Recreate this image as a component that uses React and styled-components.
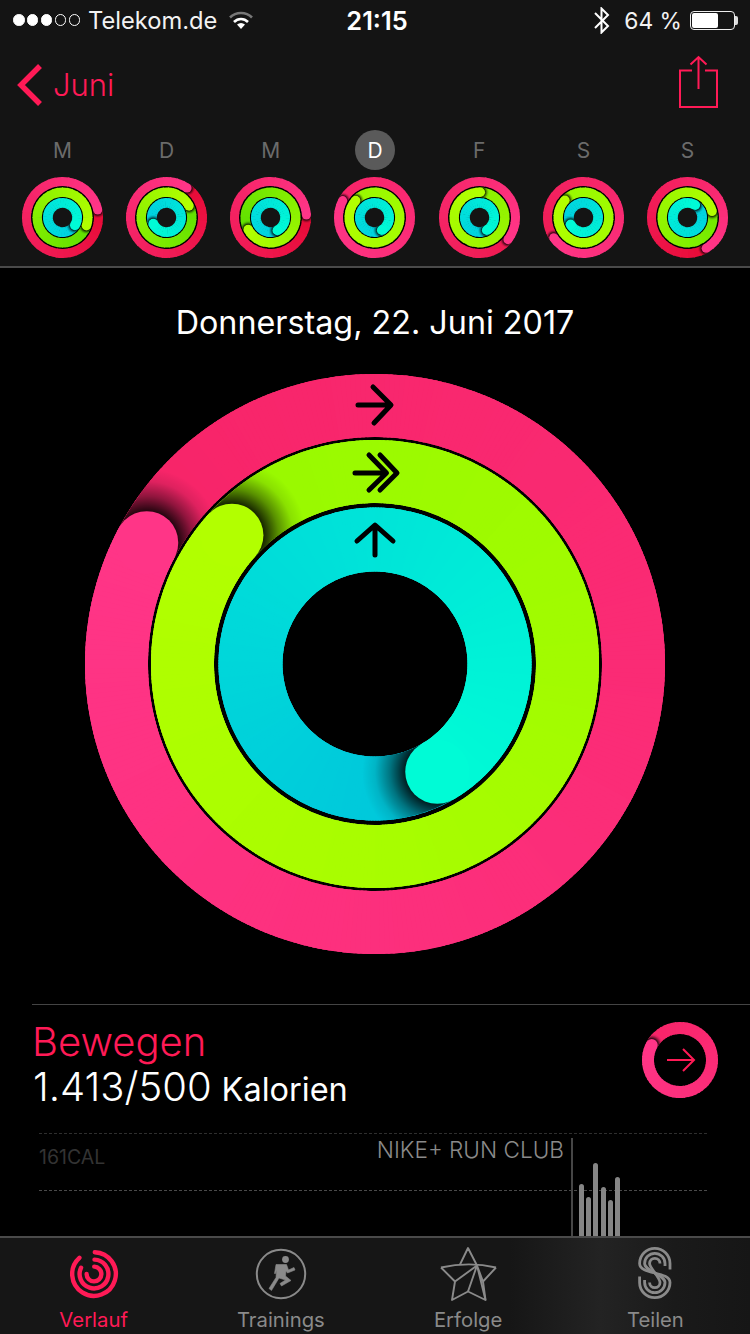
import React from 'react';
import styled, { createGlobalStyle } from 'styled-components';

const Global = createGlobalStyle`
  html, body { margin: 0; padding: 0; background: #000; }
  * { box-sizing: border-box; }
`;

const Frame = styled.div`
  width: 750px; height: 1334px; background: #000; overflow: hidden;
  display: flex; flex-direction: column;
  font-family: Inter, "Liberation Sans", sans-serif; color: #fff;
`;
const Header = styled.header`
  height: 268px; flex: none; background: #141414; border-bottom: 2px solid #4a4a4a;
`;
const StatusBar = styled.div`
  height: 40px; padding: 0 12px 0 13px;
  display: grid; grid-template-columns: 1fr auto 1fr; align-items: center;
  font-size: 23.7px; color: #f2f2f2;
`;
const StatusLeft = styled.div`display: flex; align-items: center;`;
const StatusRight = styled.div`display: flex; align-items: center; justify-content: flex-end;`;
const Dots = styled.div`display: flex; gap: 2.4px; margin-right: 8px;`;
const Dot = styled.span`
  width: 11.5px; height: 11.5px; border-radius: 50%;
  background: ${p => (p.$on ? '#fff' : 'transparent')};
  border: 1px solid #fff;
`;
const Time = styled.div`font-weight: 600; font-size: 25.4px; color: #fff; margin-left: 3px;`;
const Percent = styled.span`margin: 0 8px 0 14px; font-size: 22.8px;`;
const Battery = styled.div`
  position: relative; width: 45px; height: 19px; border: 1px solid #eee; border-radius: 4px; padding: 1px;
  margin-right: 3px;
  &::after {
    content: ''; position: absolute; right: -4px; top: 4px; width: 3px; height: 9px;
    background: #ddd; border-radius: 0 2px 2px 0;
  }
`;
const BatteryFill = styled.div`height: 100%; background: #fff; border-radius: 2px;`;
const Nav = styled.nav`
  height: 90px; display: flex; align-items: center; justify-content: space-between;
  padding: 0 31px 0 16px;
`;
const Back = styled.div`
  display: flex; align-items: center; gap: 9px; color: #ff1a56; font-size: 31px; font-weight: 300;
  line-height: 36px; margin-top: -1px;
`;
const ShareWrap = styled.div`margin-bottom: 6px;`;
const Week = styled.div`
  display: grid; grid-template-columns: repeat(7, 1fr); padding: 0 10.3px;
`;
const Day = styled.div`display: flex; flex-direction: column; align-items: center; gap: 7px;`;
const DayLabel = styled.div`
  width: 40px; height: 40px; border-radius: 50%;
  display: flex; align-items: center; justify-content: center; font-size: 21px;
  background: ${p => (p.$active ? '#5a5a5a' : 'transparent')};
  color: ${p => (p.$active ? '#fff' : '#6b6b6b')};
`;
const Main = styled.main`flex: 1; min-height: 0; overflow: hidden; display: flex; flex-direction: column;`;
const DateLine = styled.h1`
  margin: 35px 0 0; height: 40px; line-height: 40px; text-align: center;
  font-size: 32.3px; font-weight: 400; color: #fff;
`;
const Hero = styled.div`margin-top: 31px; height: 580px; display: flex; justify-content: center;`;
const Summary = styled.section`
  margin: 50px 0 0 32px; height: 129px; border-top: 1px solid #444;
  display: flex; justify-content: space-between; align-items: flex-start; padding: 15px 32px 0 0;
`;
const SummaryText = styled.div`display: flex; flex-direction: column;`;
const Title = styled.div`font-size: 40px; line-height: 44px; color: #ff1a56; font-weight: 300;`;
const Value = styled.div`font-size: 40px; line-height: 46px; color: #fff; font-weight: 300; margin-left: 1px;`;
const Unit = styled.span`font-size: 32.5px; margin-left: 10px; font-weight: 400;`;
const SummaryRing = styled.div`margin-top: 2px; height: 76px;`;
const Chart = styled.div`position: relative; flex: none; height: 103px; margin: 0 43px 0 39px;`;
const GridLine = styled.div`
  position: absolute; left: 0; right: 0; top: ${p => p.$top}px;
  border-top: 1px dashed ${p => p.$color};
`;
const AxisLabel = styled.div`
  position: absolute; left: 0; top: 12px; font-size: 19.5px; line-height: 24px; color: #333;
`;
const Source = styled.div`
  position: absolute; right: 143px; top: 3px; font-size: 22.6px; line-height: 28px; color: #8a8a8a; font-weight: 300;
  white-space: nowrap;
`;
const Marker = styled.div`
  position: absolute; left: 532px; top: 5px; bottom: 0; width: 2px; background: #464646;
`;
const Bars = styled.div`
  position: absolute; left: 540px; bottom: 0; display: flex; align-items: flex-end; gap: 2.2px;
`;
const Bar = styled.div`width: 5px; background: #858585; border-radius: 2.5px 2.5px 0 0;`;
const TabBar = styled.footer`
  height: 98px; flex: none; border-top: 2px solid #4a4a4a;
  background: linear-gradient(90deg, #161616 0%, #161616 68%, #232323 80%, #1a1a1a 90%, #161616 100%);
  display: grid; grid-template-columns: repeat(4, 1fr); padding: 6px 1px 0 0;
`;
const Tab = styled.div`
  display: flex; flex-direction: column; align-items: center;
  color: ${p => (p.$active ? '#ff1a56' : '#8a8a8a')};
`;
const TabIcon = styled.div`height: 60px;`;
const TabLabel = styled.div`margin-top: 3px; font-size: 20.3px; line-height: 26px;`;
const Svg = styled.svg`display: block;`;

const pt = (cx, cy, r, deg) => {
  const t = ((deg - 90) * Math.PI) / 180;
  return [cx + r * Math.cos(t), cy + r * Math.sin(t)];
};
const arc = (cx, cy, r, a, b) => {
  const [x0, y0] = pt(cx, cy, r, a);
  const [x1, y1] = pt(cx, cy, r, b);
  return `M${x0.toFixed(3)} ${y0.toFixed(3)}A${r} ${r} 0 ${b - a > 180 ? 1 : 0} 1 ${x1.toFixed(3)} ${y1.toFixed(3)}`;
};
const hex = h => [1, 3, 5].map(i => parseInt(h.slice(i, i + 2), 16));
const mix = (a, b, t) => {
  const A = hex(a), B = hex(b);
  return `rgb(${A.map((v, i) => Math.round(v + (B[i] - v) * t)).join(',')})`;
};

function Ring({ id, c, r, w, head, from, to, step = 2, reach = 1, lap = 1.5 }) {
  const n = Math.round(360 / step);
  const segs = [];
  for (let i = 0; i < n; i++) {
    const a = head - 360 + i * step;
    segs.push(
      <path key={i} d={arc(c, c, r, a, a + step + (i === n - 1 ? 0 : lap))} fill="none" stroke={mix(from, to, i / (n - 1))} strokeWidth={w} />
    );
  }
  const split = Math.round(n * 0.72);
  const [hx, hy] = pt(c, c, r, head);
  const ro = r + w / 2, ri = r - w / 2;
  const ann = `M${c - ro} ${c}a${ro} ${ro} 0 1 0 ${2 * ro} 0a${ro} ${ro} 0 1 0 ${-2 * ro} 0Z M${c - ri} ${c}a${ri} ${ri} 0 1 0 ${2 * ri} 0a${ri} ${ri} 0 1 0 ${-2 * ri} 0Z`;
  const sr = (w / 2) * 2.35 * reach;
  const inner = (w / 2) / sr;
  return (
    <g>
      <defs>
        <radialGradient id={`${id}g`} gradientUnits="userSpaceOnUse" cx={hx} cy={hy} r={sr}>
          <stop offset={inner} stopColor="#000" stopOpacity="0.85" />
          <stop offset={inner + (1 - inner) * 0.35} stopColor="#000" stopOpacity="0.42" />
          <stop offset={inner + (1 - inner) * 0.7} stopColor="#000" stopOpacity="0.1" />
          <stop offset="1" stopColor="#000" stopOpacity="0" />
        </radialGradient>
        <clipPath id={`${id}c`}><path d={ann} clipRule="evenodd" /></clipPath>
      </defs>
      {segs.slice(0, split)}
      <circle cx={hx} cy={hy} r={sr} fill={`url(#${id}g)`} clipPath={`url(#${id}c)`} />
      {segs.slice(split)}
      <circle cx={hx} cy={hy} r={w / 2} fill={to} />
    </g>
  );
}

const RED = '#e80b37', PINK = '#f72468', HOT = '#ff3587';
const LIME_D = '#5fe000', LIME = '#98f900', YEL = '#b2ff00';
const CY_D = '#00c4dc', CY_M = '#00cfe0', CY = '#00fbd6';

const days = [
  { l: 'M', p: 78, g: 109, c: 122, pf: RED, gf: LIME_D },
  { l: 'D', p: 35, g: 63, c: 245, pf: RED, gf: LIME_D },
  { l: 'M', p: 86, g: 242, c: 152, pf: RED, gf: LIME_D },
  { l: 'D', p: 298, g: 312, c: 150, pf: PINK, gf: LIME, active: true },
  { l: 'F', p: 128, g: 2, c: 150, pf: '#ee1a50', gf: '#8cf000' },
  { l: 'S', p: 236, g: 313, c: 242, pf: '#f01c55', gf: LIME },
  { l: 'S', p: 149, g: 76, c: 32, pf: RED, gf: '#70e800' },
];

function MiniRings({ d, i }) {
  return (
    <Svg width="81" height="81" viewBox="0 0 81 81">
      <circle cx="40.5" cy="40.5" r="31.5" fill="#000" />
      <circle cx="40.5" cy="40.5" r="10" fill="#141414" />
      <Ring id={`m${i}p`} c={40.5} r={36} w={9} head={d.p} from={d.pf} to={HOT} step={10} lap={2} reach={0.8} />
      <Ring id={`m${i}g`} c={40.5} r={25.3} w={9.4} head={d.g} from={d.gf} to={YEL} step={10} lap={2} reach={0.8} />
      <Ring id={`m${i}c`} c={40.5} r={14.6} w={9.8} head={d.c} from={CY_M} to={CY} step={10} lap={2} reach={0.8} />
    </Svg>
  );
}

const Glyph = styled.path`fill: none; stroke: #000; stroke-width: 5; stroke-linecap: round; stroke-linejoin: round;`;

function HeroRings() {
  return (
    <Svg width="580" height="580" viewBox="0 0 580 580">
      <Ring id="hp" c={290} r={258.5} w={63} head={298} from={PINK} to={HOT} step={1} />
      <Ring id="hg" c={290} r={192.5} w={63} head={312} from={LIME} to={YEL} step={1} />
      <Ring id="hc" c={290} r={124.5} w={64} head={150} from={CY_D} to={CY} step={1} />
      <g transform="translate(-85 -374)">
        <Glyph d="M358 405H390M373 387L391 405L374 423" />
        <Glyph d="M355 473H383M369 455L386.5 473L369 490M380 455L397 473L380 490" />
        <Glyph d="M375 555V526M357 541L375 525L393 541" />
      </g>
    </Svg>
  );
}

const Wifi = () => (
  <Svg width="24" height="20" viewBox="0 0 24 20" style={{ marginLeft: 12 }}>
    <path d="M1 7.5C7 1.5 17 1.5 23 7.5" fill="none" stroke="#777" strokeWidth="2.6" />
    <path d="M5 12C9 8 15 8 19 12" fill="none" stroke="#fff" strokeWidth="2.6" />
    <path d="M8 14.6C10.5 12.6 13.5 12.6 16 14.6L12 19Z" fill="#fff" />
  </Svg>
);
const Bluetooth = () => (
  <Svg width="16" height="27" viewBox="0 0 16 27">
    <path d="M1 6L14 19L7.5 25.5V1.5L14 8L1 21" fill="none" stroke="#fff" strokeWidth="2" />
  </Svg>
);
const BackChevron = () => (
  <Svg width="28" height="44" viewBox="0 0 28 44">
    <path d="M24 3L5 22L24 41" fill="none" stroke="#ff1a56" strokeWidth="5.5" />
  </Svg>
);
const Share = () => (
  <Svg width="40" height="54" viewBox="0 0 40 54">
    <path d="M13 15.5H1V52H38V15.5H26" fill="none" stroke="#ff1a56" strokeWidth="2" />
    <path d="M19.5 34V2M11.5 9.5L19.5 2L27.5 9.5" fill="none" stroke="#ff1a56" strokeWidth="2" />
  </Svg>
);

const VerlaufIcon = () => (
  <Svg width="58" height="60" viewBox="0 0 58 60" fill="none" stroke="#ff1a56" strokeWidth="4.4" strokeLinecap="round">
    <path d={arc(29, 30, 21.8, 2, 318)} />
    <path d={arc(29, 30, 14.4, 2, 296)} />
    <path d={arc(29, 30, 7.4, 2, 270)} />
  </Svg>
);
const RunIcon = () => (
  <Svg width="62" height="60" viewBox="0 0 62 60">
    <circle cx="31" cy="30" r="24.2" fill="none" stroke="#8a8a8a" strokeWidth="2" />
    <circle cx="35.5" cy="15.5" r="3.4" fill="#8a8a8a" />
    <path d="M26 20.5H36.5L38.5 26L44 23.5L45 26L37.5 29L36 27L35.5 32L41 36.5L31.5 42L30 39.5L35.5 36L29 34L21.5 46.5L19 44.5L26 33.5L26.5 26L25.5 29.5H24.5Z" fill="#8a8a8a" stroke="#8a8a8a" strokeWidth="0.6" strokeLinejoin="round" />
  </Svg>
);
const StarIcon = () => (
  <Svg width="66" height="60" viewBox="0 0 66 60" fill="none" stroke="#8a8a8a" strokeWidth="1.9" strokeLinejoin="round">
    <path d="M25 20.5L33 4L42 21.5L48 37.5L61 23.5M6 23.5L20 37.5L17 56L33 47.5L50.5 56L42 21.5" />
    <path d="M6 23.5C24 19.5 44 19.5 61 23.5" />
    <path d="M42 21.5L20 37.5M42 21.5L33 47.5M48 37.5L50.5 56" />
  </Svg>
);
const ShareIcon = () => (
  <Svg width="52" height="60" viewBox="0 0 52 60" fill="none" stroke="#8a8a8a" strokeWidth="2.8">
    <path d="M41 25.5V19.5A15.2 15.2 0 0 0 10.6 19.5C10.6 31 41 27 41 38.5A15.2 15.2 0 0 1 10.6 38.5V32.5" />
    <path d="M36 22V19.5A10.2 10.2 0 0 0 15.6 19.5C15.6 27 36 31 36 38.5A10.2 10.2 0 0 1 15.6 38.5V36" />
    <path d="M31 19.5A5.2 5.2 0 0 0 20.6 19.5C20.6 24 31 33.5 31 38.5A5.2 5.2 0 0 1 20.6 38.5" />
  </Svg>
);

const bars = [52, 39, 73, 49, 36, 59];

export default function App() {
  return (
    <Frame>
      <Global />
      <Header>
        <StatusBar>
          <StatusLeft>
            <Dots>
              {[1, 1, 1, 0, 0].map((on, i) => <Dot key={i} $on={!!on} />)}
            </Dots>
            <span>Telekom.de</span>
            <Wifi />
          </StatusLeft>
          <Time>21:15</Time>
          <StatusRight>
            <Bluetooth />
            <Percent>64 %</Percent>
            <Battery><BatteryFill style={{ width: '64%' }} /></Battery>
          </StatusRight>
        </StatusBar>
        <Nav>
          <Back><BackChevron /><span>Juni</span></Back>
          <ShareWrap><Share /></ShareWrap>
        </Nav>
        <Week>
          {days.map((d, i) => (
            <Day key={i}>
              <DayLabel $active={d.active}>{d.l}</DayLabel>
              <MiniRings d={d} i={i} />
            </Day>
          ))}
        </Week>
      </Header>
      <Main>
        <DateLine>Donnerstag, 22. Juni 2017</DateLine>
        <Hero><HeroRings /></Hero>
        <Summary>
          <SummaryText>
            <Title>Bewegen</Title>
            <Value>1.413/500<Unit>Kalorien</Unit></Value>
          </SummaryText>
          <SummaryRing>
            <Svg width="76" height="76" viewBox="0 0 76 76">
              <Ring id="sp" c={38} r={32} w={12} head={298} from={PINK} to={HOT} step={6} lap={2} reach={0.8} />
              <path d="M25 38H51M41 27L52 38L41 49" fill="none" stroke="#ff1a56" strokeWidth="2" />
            </Svg>
          </SummaryRing>
        </Summary>
        <Chart>
          <GridLine $top={0} $color="#2e2e2e" />
          <GridLine $top={57} $color="#4a4a4a" />
          <AxisLabel>161CAL</AxisLabel>
          <Source>NIKE+ RUN CLUB</Source>
          <Marker />
          <Bars>
            {bars.map((h, i) => <Bar key={i} style={{ height: h }} />)}
          </Bars>
        </Chart>
      </Main>
      <TabBar>
        <Tab $active><TabIcon><VerlaufIcon /></TabIcon><TabLabel>Verlauf</TabLabel></Tab>
        <Tab><TabIcon><RunIcon /></TabIcon><TabLabel>Trainings</TabLabel></Tab>
        <Tab><TabIcon><StarIcon /></TabIcon><TabLabel>Erfolge</TabLabel></Tab>
        <Tab><TabIcon><ShareIcon /></TabIcon><TabLabel>Teilen</TabLabel></Tab>
      </TabBar>
    </Frame>
  );
}
